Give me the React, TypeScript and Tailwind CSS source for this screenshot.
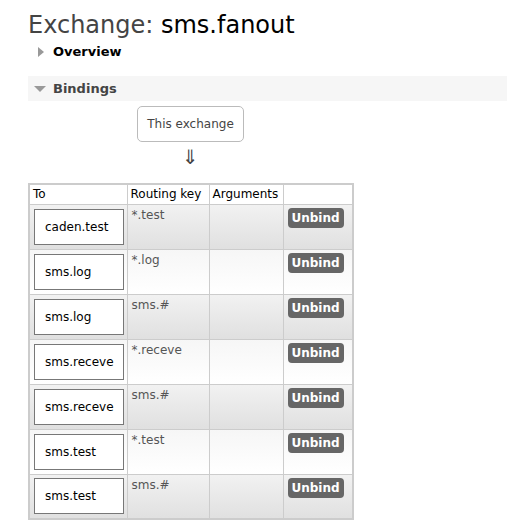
import React from 'react';

const bindings = [
  { to: 'caden.test', key: '*.test' },
  { to: 'sms.log', key: '*.log' },
  { to: 'sms.log', key: 'sms.#' },
  { to: 'sms.receve', key: '*.receve' },
  { to: 'sms.receve', key: 'sms.#' },
  { to: 'sms.test', key: '*.test' },
  { to: 'sms.test', key: 'sms.#' },
];

export default function App() {
  return (
    <div className="w-[507px] h-[529px] bg-white text-[12px] text-[#444] overflow-hidden" style={{ fontFamily: '"DejaVu Sans", Verdana, sans-serif' }}>
      <div className="pl-[28px] pt-[8px]">
        <h1 className="text-[24px] leading-[34px] text-[#444]">
          Exchange: <span className="text-black">sms.fanout</span>
        </h1>

        {/* Overview (collapsed) */}
        <div className="flex items-center h-[20px] pl-[10px]">
          <span className="w-0 h-0 border-y-[5px] border-y-transparent border-l-[6px] border-l-[#999]" />
          <span className="ml-[9px] font-bold text-[13px] text-black">Overview</span>
        </div>

        {/* Bindings (open) */}
        <div className="mt-[14px] flex items-center h-[25px] bg-[#f6f6f6] pl-[6px]">
          <span className="w-0 h-0 border-x-[6px] border-x-transparent border-t-[6px] border-t-[#999]" />
          <span className="ml-[7px] font-bold text-[13px] text-[#444]">Bindings</span>
        </div>

        <div className="flex flex-col items-start">
          <div className="ml-[109px] mt-[5px] w-[107px] h-[36px] flex items-center justify-center border border-[#bbb] rounded-[5px] text-[#444]">
            This exchange
          </div>
          <div className="ml-[154px] mt-[2px] text-[20px] leading-[26px] text-[#444]">⇓</div>

          <table className="mt-[13px] w-[324px] table-fixed border-collapse border-2 border-[#ccc] text-[12px]">
            <colgroup>
              <col className="w-[98px]" />
              <col className="w-[82px]" />
              <col className="w-[74px]" />
              <col className="w-[70px]" />
            </colgroup>
            <thead>
              <tr className="h-[20px]">
                <th className="border border-[#ccc] px-[3px] text-left font-normal text-black">To</th>
                <th className="border border-[#ccc] px-[3px] text-left font-normal text-black whitespace-nowrap">Routing key</th>
                <th className="border border-[#ccc] px-[3px] text-left font-normal text-black">Arguments</th>
                <th className="border border-[#ccc]"></th>
              </tr>
            </thead>
            <tbody>
              {bindings.map((b, i) => (
                <tr
                  key={i}
                  className={
                    i % 2 === 0
                      ? 'h-[45px] bg-linear-to-b from-[#f2f2f2] to-[#e0e0e0]'
                      : 'h-[45px] bg-linear-to-b from-[#f6f6f6] to-[#ffffff]'
                  }
                >
                  <td className="border border-[#ccc] px-[4px] py-0 align-middle">
                    <div className="w-[90px] h-[36px] flex items-center pl-[10px] border border-[#777] bg-white text-black">
                      {b.to}
                    </div>
                  </td>
                  <td className="border border-[#ccc] px-[4px] pt-[1px] align-top text-[#555]">{b.key}</td>
                  <td className="border border-[#ccc]"></td>
                  <td className="border border-[#ccc] px-[4px] pt-[3px] align-top">
                    <span className="inline-flex items-center justify-center w-[56px] h-[20px] rounded-[4px] bg-[#666] text-white font-bold text-[12px]">
                      Unbind
                    </span>
                  </td>
                </tr>
              ))}
            </tbody>
          </table>
        </div>
      </div>
    </div>
  );
}
